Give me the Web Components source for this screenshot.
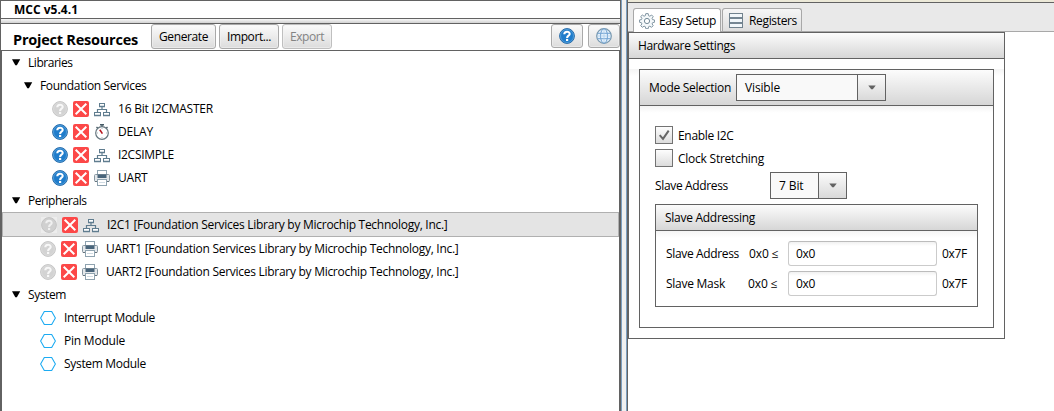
<!DOCTYPE html>
<html lang="en"><head><meta charset="utf-8"><title>MCC</title>
<style>html,body{margin:0;height:100%;overflow:hidden;background:#fff}body{font:12px/16px "Open Sans","Noto Sans",sans-serif;color:#000}</style></head>
<body><mcc-app></mcc-app>
<script>
const define=(name,html,init)=>{
  const t=document.createElement('template');t.innerHTML=html;
  customElements.define(name,class extends HTMLElement{
    connectedCallback(){
      if(this.shadowRoot)return;
      this.attachShadow({mode:'open'}).append(t.content.cloneNode(true));
      if(init)init.call(this,this.shadowRoot);
    }
  });
};

/* Text that tracks its letters so it fills a given width */
define('ui-text',`<style>:host{display:inline-block;white-space:pre;flex:none}span{display:inline-block}</style><span><slot></slot></span>`,function(r){
  const w=+this.getAttribute('w');if(!w)return;
  const s=r.querySelector('span'),n=this.textContent.length;
  s.style.letterSpacing='0';
  const nat=s.getBoundingClientRect().width;
  s.style.letterSpacing=((w-nat)/n)+'px';
  this.style.width=w+'px';
});

const mark=c=>`<path d="M5.3 6.2C5.2 2.9 10.8 2.9 10.7 6C10.6 7.8 8.1 7.7 8.1 9.9" fill="none" stroke="${c}" stroke-width="2.1"/><rect x="7" y="10.9" width="2.2" height="2.1" fill="${c}"/>`;
const ICONS={
help:`<circle cx="8" cy="8" r="7.4" fill="#1f7ccb" stroke="#2a6ca8" stroke-width="1"/><circle cx="8" cy="8" r="6.5" fill="none" stroke="#5aa3dc" stroke-width=".8"/>${mark('#fff')}`,
helpoff:`<circle cx="8" cy="8" r="7.4" fill="#d3d3d3" stroke="#c6c6c6"/><circle cx="8" cy="8" r="6.4" fill="none" stroke="#dedede" stroke-width=".7"/>${mark('#f8f8f8')}`,
helpsel:`<rect width="16" height="16" fill="#ededed"/><circle cx="8" cy="8" r="7.4" fill="#d0d0d0" stroke="#c4c4c4"/>${mark('#f0f0f0')}`,
remove:`<rect width="16" height="16" rx="2" fill="#fc4848"/><path d="M2.7 2.7L13.3 13.3M13.3 2.7L2.7 13.3" stroke="#fff" stroke-width="2"/>`,
net:`<g fill="#fff" stroke="#607d8f"><rect x="5.5" y="2.5" width="5" height="3"/><rect x=".5" y="11.5" width="6" height="3"/><rect x="9.5" y="11.5" width="6" height="3"/><path d="M8 6V8.5M3.5 11V8.5H12.5V11" fill="none" stroke-width="1.2"/></g><path d="M5 5.5h6M0 14.5h7M9 14.5h7" stroke="#607d8f" stroke-width="1.5"/>`,
clock:`<rect x="6" y="0" width="4" height="1.5" fill="#455a65"/><path d="M8 1v2M2.5 3l1.3 1.3M13.5 3l-1.3 1.3" stroke="#455a65" stroke-width="1.3"/><circle cx="8" cy="9" r="6.3" fill="#fff" stroke="#65757e" stroke-width="1.2"/><path d="M8 4v1M8 13v1M3 9h1M12 9h1" stroke="#9aa6ac" stroke-width=".8"/><path d="M8.4 9.6L5.8 5.8" stroke="#b6141c" stroke-width="1.6"/>`,
printer:`<rect x="3.5" y=".5" width="9" height="5" fill="#fff" stroke="#8fa3b0"/><rect x=".5" y="4.5" width="15" height="7" rx="1" fill="#e3e7ea" stroke="#8696a1"/><rect x="3.5" y="4.5" width="9" height="3.5" fill="#49657b"/><path d="M1 11.5h14" stroke="#66737c"/><rect x="3.5" y="9.5" width="9" height="6" fill="#fff" stroke="#8fa3b0"/><path d="M5 12.5h6" stroke="#d0dbe3"/>`,
hex:`<path d="M4.3 1.5H11.7L15.4 8L11.7 14.5H4.3L.6 8Z" fill="#fff" stroke="#1cabf2" stroke-width="1.1"/>`,
globe:`<circle cx="8" cy="8" r="7.3" fill="#e5f1fc" stroke="#7897ad" stroke-width="1.2"/><ellipse cx="8" cy="8" rx="3.5" ry="7.2" fill="none" stroke="#70a2d1"/><path d="M1.6 5.3h12.8M1.6 10.7h12.8" stroke="#70a2d1" fill="none"/><path d="M1 8h14M8 1v14" stroke="#a9cbea" stroke-width=".7"/>`,
gear:`<path d="M6.8.6h2.4l.4 2.1 1.2.5 1.8-1.2 1.6 1.6-1.1 1.8.5 1.2 2 .4v2.2l-2 .5-.5 1.2 1.1 1.8-1.6 1.6-1.8-1.1-1.2.5-.4 2H6.8l-.5-2-1.2-.5-1.8 1.1-1.6-1.6 1.2-1.8-.5-1.2-2-.5V7l2-.4.5-1.2L1.7 3.6 3.3 2l1.8 1.2 1.2-.5z" fill="#f4f8fa" stroke="#748a98" stroke-width=".9"/><circle cx="8" cy="8" r="2.6" fill="#fff" stroke="#748a98"/>`,
regs:`<g fill="#f2f7fa" stroke="#71828e"><rect x="1.5" y="1.5" width="13" height="4"/><rect x="1.5" y="6.5" width="13" height="4"/><rect x="1.5" y="11.5" width="13" height="4"/></g><path d="M2 6h12M2 11h12" stroke="#8b9ba6" stroke-width=".4"/>`
};
define('ui-icon',`<style>:host{display:block;width:16px;height:16px;flex:none}svg{display:block}</style><svg width="16" height="16" viewBox="0 0 16 16"></svg>`,function(r){r.querySelector('svg').innerHTML=ICONS[this.getAttribute('name')]});

define('ui-button',`<style>:host{display:flex;box-sizing:border-box;align-items:center;justify-content:center;height:25px;border:1px solid #a9a9a9;border-radius:3px;background:linear-gradient(#fbfbfb,#dcdcdc);box-shadow:inset 0 0 0 1px #f4f4f488}:host([disabled]){color:#838383;border-color:#bfbfbf}</style><slot></slot>`);

define('tree-row',`<style>:host{display:flex;align-items:center;box-sizing:border-box;height:23px}
:host([selected]){height:25px;background:#e4e4e4;border:1px solid #b0b0b0}
svg{flex:none;margin-right:7px;margin-top:-1px}.i{display:flex;gap:5px;margin-right:8px}</style><div class="i"></div><slot></slot>`,function(r){
  this.style.paddingLeft=this.getAttribute('x')+'px';
  const i=r.querySelector('.i'),names=this.getAttribute('icons');
  if(names){i.innerHTML=names.split(' ').map(n=>`<ui-icon name="${n}"></ui-icon>`).join('');return}
  const t=document.createElement('template');
  t.innerHTML='<svg width="9" height="7"><path d="M0 .3H8.2L4.9 6.3H3.3Z"/></svg>';
  i.replaceWith(t.content);
});

define('ui-tab',`<style>:host{display:flex;align-items:center;box-sizing:border-box;height:23px;border:1px solid #a8a8a8;border-bottom:0;border-radius:3px 3px 0 0;background:linear-gradient(#f6f6f6,#dedede)}:host([active]){background:#fff;height:24px;margin-bottom:-1px}ui-icon{margin:0 4px 0 5px}:host(:not([active])) ui-icon{margin-right:5px}</style><slot></slot>`,function(r){
  const n=document.createElement('ui-icon');n.setAttribute('name',this.getAttribute('icon'));r.querySelector('slot').before(n);
});

define('ui-panel',`<style>:host{display:block;box-sizing:border-box;border:1px solid #626262;background:#fff}
header{display:flex;align-items:center;box-sizing:border-box;height:var(--head,26px);padding-left:9px;border-bottom:1px solid #626262;background:linear-gradient(#fcfcfc,#d6d6d6)}
main{background:linear-gradient(#f4f4f4,#fff 7px)}</style><header><slot name="head"></slot></header><main><slot></slot></main>`);

define('ui-combo',`<style>:host{display:flex;box-sizing:border-box;height:27px;border:1px solid #626262;background:#f9f9f9}
.v{flex:1;display:flex;align-items:center;padding-left:8px}.b{box-sizing:border-box;width:28px;border-left:1px solid #626262;display:grid;place-items:center;background:linear-gradient(#fbfbfb,#d9d9d9)}</style><div class="v"><slot></slot></div><div class="b"><svg width="8" height="5"><path d="M.3.5H7.7L4.8 4.3H3.2Z" fill="#626262"/></svg></div>`);

define('ui-check',`<style>:host{display:flex;align-items:center;gap:5px;height:18px}.b{box-sizing:border-box;width:18px;height:18px;border:1px solid #737373;background:linear-gradient(#fdfdfd,#dcdcdc)}.t{padding-top:1px;height:16px}svg{display:none}:host([checked]) svg{display:block}</style><div class="b"><svg width="16" height="16"><path d="M3.7 8.1L7 11.8L12.7 3.7" fill="none" stroke="#656565" stroke-width="2"/></svg></div><div class="t"><slot></slot></div>`);

define('ui-field',`<style>:host{display:flex;align-items:center;box-sizing:border-box;width:149px;height:25px;padding-left:7px;border:1px solid #cbcbcb;border-top-color:#bcbcbc;border-radius:3px;background:linear-gradient(#f1f1f1,#fff 4px)}</style><slot></slot>`);

define('resource-pane',`<style>
:host{display:flex;flex-direction:column;box-sizing:border-box;width:621px;height:411px;background:#fff}
.title{box-sizing:border-box;height:19px;border:1px solid #626262;padding:1px 0 0 13px;font-weight:700;line-height:15px}
.bar{height:4px;background:linear-gradient(#f8f8f8,#d2d2d2);border:solid #626262;border-width:0 1px 1px}
.tools{display:flex;height:26px;border:solid #626262;border-width:0 1px 1px;padding-left:12px}
h1{margin:7px 13px 0 0;font-size:14.5px;line-height:18px;font-weight:700;width:125px}
.g{display:flex;gap:3px}.e{display:flex;gap:5px;margin-left:auto}
.e ui-button{width:32px;height:24px}
.tree{flex:1;border:solid #626262;border-width:0 2px}
</style>
<div class="title"><ui-text w="64">MCC v5.4.1</ui-text></div><div class="bar"></div>
<div class="tools"><h1><ui-text w="125">Project Resources</ui-text></h1>
<div class="g"><ui-button style="width:65px"><ui-text w="49">Generate</ui-text></ui-button><ui-button style="width:60px"><ui-text w="44">Import...</ui-text></ui-button><ui-button disabled style="width:50px"><ui-text w="34">Export</ui-text></ui-button></div>
<div class="e"><ui-button><ui-icon name="help"></ui-icon></ui-button><ui-button><ui-icon name="globe"></ui-icon></ui-button></div></div>
<div class="tree">
<tree-row x="10"><ui-text w="44.5">Libraries</ui-text></tree-row>
<tree-row x="22"><ui-text w="106.5">Foundation Services</ui-text></tree-row>
<tree-row x="50" icons="helpoff remove net"><ui-text w="95">16 Bit I2CMASTER</ui-text></tree-row>
<tree-row x="50" icons="help remove clock"><ui-text w="35">DELAY</ui-text></tree-row>
<tree-row x="50" icons="help remove net"><ui-text w="56">I2CSIMPLE</ui-text></tree-row>
<tree-row x="50" icons="help remove printer"><ui-text w="29.5">UART</ui-text></tree-row>
<tree-row x="10"><ui-text w="58.5">Peripherals</ui-text></tree-row>
<tree-row x="38" selected icons="helpsel remove net"><ui-text w="340.5">I2C1 [Foundation Services Library by Microchip Technology, Inc.]</ui-text></tree-row>
<tree-row x="38" icons="helpoff remove printer"><ui-text w="352.5">UART1 [Foundation Services Library by Microchip Technology, Inc.]</ui-text></tree-row>
<tree-row x="38" icons="helpoff remove printer"><ui-text w="352.5">UART2 [Foundation Services Library by Microchip Technology, Inc.]</ui-text></tree-row>
<tree-row x="10"><ui-text w="38">System</ui-text></tree-row>
<tree-row x="38" icons="hex"><ui-text w="91">Interrupt Module</ui-text></tree-row>
<tree-row x="38" icons="hex"><ui-text w="61">Pin Module</ui-text></tree-row>
<tree-row x="38" icons="hex"><ui-text w="82">System Module</ui-text></tree-row>
</div>`);

define('setup-pane',`<style>
:host{display:flex;flex-direction:column;box-sizing:border-box;height:411px;flex:1;border-left:1px solid #626262;background:#fff}
.top{height:2px;background:#ece9d8}
.tabs{display:flex;align-items:flex-end;gap:1px;box-sizing:border-box;height:30px;padding-left:5px;border-top:1px solid #626262;border-bottom:1px solid #a8a8a8;background:#e9e9e9}
ui-tab ui-text{padding-top:1px}
.outer{width:377px;height:307px}
.inner{margin:10px;width:355px;height:259px;--head:36px}
.inner>ui-text{padding-top:1px}
.body{padding:20px 15px 0}
ui-check+ui-check{margin-top:5px}
.addr{display:flex;align-items:center;margin-top:5px}.addr ui-combo{width:77px;margin-left:42px}
.sub{width:323px;height:103px;margin-top:5px;--head:26px}
.grid{display:grid;grid-template-columns:83px 39px 149px 25px;row-gap:5px;padding:10px;align-items:center}
.grid ui-field+ui-text{margin-left:5px}
</style>
<div class="top"></div>
<div class="tabs"><ui-tab active icon="gear" style="width:88px"><ui-text w="57">Easy Setup</ui-text></ui-tab><ui-tab icon="regs" style="width:80px"><ui-text w="48">Registers</ui-text></ui-tab></div>
<ui-panel class="outer"><ui-text slot="head" w="97">Hardware Settings</ui-text>
<ui-panel class="inner"><ui-text slot="head" w="82" style="padding-top:1px">Mode Selection</ui-text><ui-combo slot="head" style="width:150px;margin-left:5px"><ui-text w="35">Visible</ui-text></ui-combo>
<div class="body">
<ui-check checked><ui-text w="55.5">Enable I2C</ui-text></ui-check><ui-check><ui-text w="86">Clock Stretching</ui-text></ui-check>
<div class="addr"><ui-text w="73">Slave Address</ui-text><ui-combo><ui-text w="24.5">7 Bit</ui-text></ui-combo></div>
<ui-panel class="sub"><ui-text slot="head" w="90">Slave Addressing</ui-text>
<div class="grid"><ui-text w="73">Slave Address</ui-text><ui-text w="29.5">0x0 ≤</ui-text><ui-field><ui-text w="19">0x0</ui-text></ui-field><ui-text w="25">0x7F</ui-text>
<ui-text w="59">Slave Mask</ui-text><ui-text w="29.5" style="margin-left:-1px">0x0 ≤</ui-text><ui-field><ui-text w="19">0x0</ui-text></ui-field><ui-text w="25">0x7F</ui-text></div>
</ui-panel></div></ui-panel></ui-panel>`);

define('mcc-app',`<style>:host{display:flex;width:1054px;height:411px;overflow:hidden}.split{box-sizing:border-box;width:6px;background:#f0f0f0;border:solid #7c9fc0;border-width:0 1px}</style><resource-pane></resource-pane><div class="split"></div><setup-pane></setup-pane>`);
</script></body></html>
